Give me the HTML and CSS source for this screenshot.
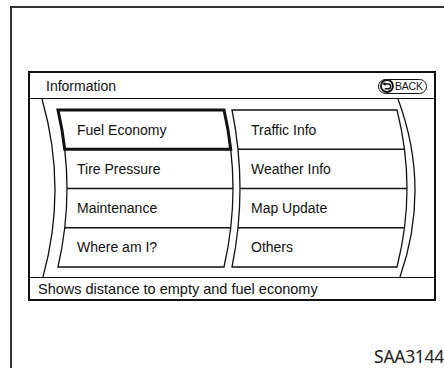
FILE: index.html
```html
<!DOCTYPE html>
<html>
<head>
<meta charset="utf-8">
<link rel="stylesheet" href="styles.css">
</head>
<body>
<div class="page">
  <div class="screen">
    <div class="header">
      <span class="title">Information</span>
      <span class="back">
        <svg class="back-icon" width="14" height="14" viewBox="0 0 14 14">
          <circle cx="7" cy="7" r="6" fill="#fff" stroke="#111" stroke-width="1.8"/>
          <path d="M4.6 5 H8.3 A2.4 2.4 0 0 1 8.3 9.8 H4.8" fill="none" stroke="#111" stroke-width="1.5"/>
          <polygon points="2.6,5 5.4,3 5.4,7" fill="#111"/>
        </svg>
        <span class="back-label">BACK</span>
      </span>
    </div>
    <div class="menu">
      <svg class="menu-art" width="404" height="178" viewBox="30 99 404 178">
        <g fill="none" stroke="#111" stroke-width="1.3">
          <path d="M42 99 Q67.5 188 43 277"/>
          <path d="M398 99 Q431 188 400 277"/>
          <path d="M58 110 L224 110 Q242 188.5 224 267 L58 267 Q76 188.5 58 110 Z" fill="#fff"/>
          <path d="M232 110 L397 110 Q417 188.5 397 267 L232 267 Q248 188.5 232 110 Z" fill="#fff"/>
          <path d="M64.7 149.25 H230.7 M67 188.5 H233 M64.7 227.75 H230.7"/>
          <path d="M238 149.25 H404.5 M240 188.5 H407 M238 227.75 H404.5"/>
        </g>
        <path d="M58 110 L224 110 Q228.5 129.5 230.7 149.25 L64.7 149.25 Q62.5 129.5 58 110 Z" fill="none" stroke="#111" stroke-width="3"/>
      </svg>
      <div class="items">
        <span class="item">Fuel Economy</span>
        <span class="item">Traffic Info</span>
        <span class="item">Tire Pressure</span>
        <span class="item">Weather Info</span>
        <span class="item">Maintenance</span>
        <span class="item">Map Update</span>
        <span class="item">Where am I?</span>
        <span class="item">Others</span>
      </div>
    </div>
    <div class="status">Shows distance to empty and fuel economy</div>
  </div>
  <div class="caption">SAA3144</div>
</div>
</body>
</html>
```

FILE: styles.css
```css
html, body {
  margin: 0;
  padding: 0;
  background: #fff;
  overflow: hidden;
  width: 444px;
  height: 368px;
}

.page {
  margin: 6px 0 0 10px;
  width: 432px;
  height: 360px;
  border-top: 2px solid #333;
  border-left: 2px solid #333;
  display: flex;
  flex-direction: column;
  font-family: "Liberation Sans", Arial, sans-serif;
  color: #111;
}

.screen {
  margin: 63px 0 0 16px;
  width: 404px;
  border: 2px solid #111;
  display: flex;
  flex-direction: column;
}

.header {
  height: 25px;
  border-bottom: 1px solid #111;
  display: flex;
  align-items: center;
  justify-content: space-between;
  padding: 0 7px 0 16px;
}

.title {
  font-size: 14px;
  line-height: 16px;
}

.back {
  display: flex;
  align-items: center;
  height: 13px;
  width: 47px;
  border: 1.2px solid #111;
  border-radius: 8px;
  margin-top: 1px;
  box-sizing: content-box;
}

.back-icon {
  display: block;
  margin-left: 1px;
  flex: none;
}

.back-label {
  font-size: 10.5px;
  line-height: 12px;
  margin-left: 1px;
  letter-spacing: -0.2px;
}

.menu {
  position: relative;
  height: 178px;
  border-bottom: 1px solid #111;
}

.menu-art {
  position: absolute;
  left: 0;
  top: 0;
  display: block;
}

.items {
  position: relative;
  display: grid;
  grid-template-columns: 174px 1fr;
  grid-template-rows: repeat(4, 39.25px);
  padding: 11px 0 0 47px;
  align-items: center;
}

.item {
  font-size: 14px;
  line-height: 16px;
}

.status {
  height: 21px;
  display: flex;
  align-items: center;
  padding-left: 8px;
  font-size: 14.5px;
  line-height: 16px;
}

.caption {
  align-self: flex-end;
  margin-top: 46px;
  font-family: "Noto Sans", sans-serif;
  font-size: 17.5px;
  line-height: 18px;
  letter-spacing: -0.3px;
  color: #222;
  white-space: nowrap;
}
```
